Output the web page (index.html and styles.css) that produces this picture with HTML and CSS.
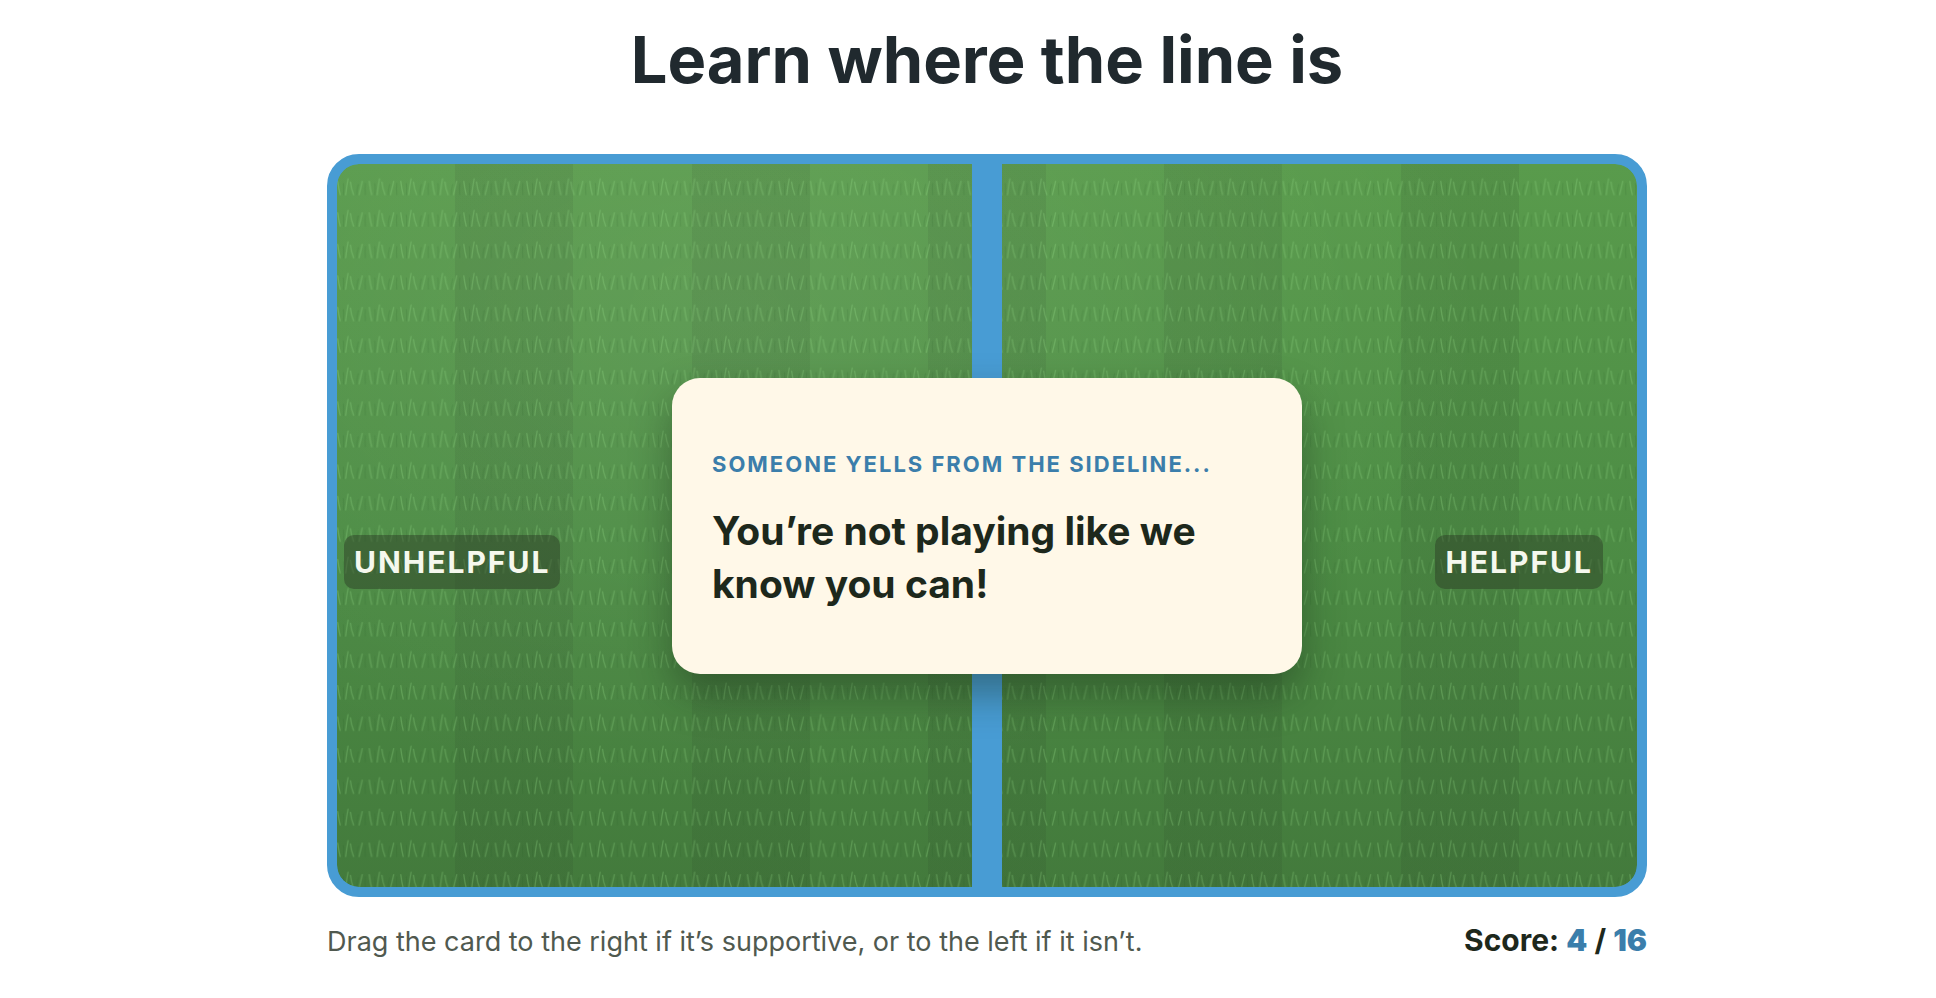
FILE: index.html
```html
<!DOCTYPE html>
<html lang="en">
<head>
<meta charset="utf-8">
<title>Learn where the line is</title>
<link rel="stylesheet" href="styles.css">
</head>
<body>
<main class="game">
  <h1 class="title">Learn where the line is</h1>
  <section class="field" aria-label="Playing field">
    <svg class="turf" viewBox="0 0 1650 918" preserveAspectRatio="xMinYMin slice" aria-hidden="true">
      <defs>
        <pattern id="grass" width="40" height="40" patternUnits="userSpaceOnUse">
          <g fill="none" stroke-width="1.6" stroke-linecap="round">
            <path stroke="#9be08a" stroke-opacity=".28" d="M1 22Q2 31 4 39M11 39Q12 29 14 19M17 23Q18 32 21 39M28 39Q30 31 32 22"/>
            <path stroke="#1d5420" stroke-opacity=".13" d="M8 39Q9 31 8 25M25 39Q25 32 27 26M36 39Q35 31 36 25"/>
          </g>
        </pattern>
      </defs>
      <rect width="100%" height="100%" fill="url(#grass)"/>
    </svg>
    <div class="half half-left"><span class="zone">Unhelpful</span></div>
    <div class="line"></div>
    <div class="half half-right"><span class="zone">Helpful</span></div>
    <article class="card">
      <p class="kicker">Someone yells from the sideline...</p>
      <p class="quote">You’re not playing like we know you can!</p>
    </article>
  </section>
  <footer class="status">
    <p class="hint">Drag the card to the right if it’s supportive, or to the left if it isn’t.</p>
    <p class="score">Score: <b>4</b> / <b>16</b></p>
  </footer>
</main>
</body>
</html>
```
FILE: styles.css
```css
* { box-sizing: border-box; }
body {
  margin: 0;
  padding-left: 38px;
  background: #fff;
  color: #1d281c;
  font-family: Inter, "Liberation Sans", sans-serif;
}
p, h1 { margin: 0; }
.game {
  max-width: 1320px;
  margin: 0 auto;
}
.title {
  padding: 16px 0 50px;
  color: #20292e;
  font-size: 65px;
  line-height: 88px;
  font-weight: 700;
  text-align: center;
}
.field {
  position: relative;
  display: grid;
  grid-template-columns: 1fr 30px 1fr;
  min-height: 743px;
  border: 10px solid #489cd4;
  border-radius: 32px;
  overflow: hidden;
  background:
    radial-gradient(ellipse at 30% 20%, rgba(255, 255, 255, .07), transparent 60%) padding-box,
    repeating-linear-gradient(90deg, transparent 0 calc(100% / 11), rgba(30, 40, 30, .09) calc(100% / 11) calc(200% / 11)) padding-box,
    linear-gradient(#599b4c, #4d8d45 50%, #437a3c) padding-box,
    linear-gradient(#489cd4, #489cd4) border-box;
}
.turf {
  position: absolute;
  inset: 0;
  width: 100%;
  height: 100%;
}
.half {
  position: relative;
  display: flex;
  align-items: center;
  padding-top: 72px;
}
.half-left { padding-left: 7px; }
.half-right { justify-content: flex-end; padding-right: 34px; }
.line { position: relative; background: #489cd4; }
.zone {
  padding: 0 10px;
  border-radius: 10px;
  background: rgba(42, 55, 35, .45);
  color: #f5f8ee;
  font-size: 30px;
  line-height: 54px;
  font-weight: 700;
  letter-spacing: 2px;
  text-transform: uppercase;
}
.card {
  position: absolute;
  top: 50%;
  left: 50%;
  transform: translate(-50%, -50%);
  width: 630px;
  min-height: 296px;
  padding: 46px 40px 40px;
  display: flex;
  flex-direction: column;
  justify-content: center;
  gap: 24px;
  border-radius: 28px;
  background: #fff8e8;
  box-shadow: 0 20px 40px rgba(20, 40, 20, .4);
}
.kicker {
  color: #3b7eab;
  font-size: 22px;
  line-height: 32px;
  font-weight: 700;
  letter-spacing: 2px;
  text-transform: uppercase;
}
.quote {
  font-size: 39px;
  line-height: 53px;
  font-weight: 700;
}
.status {
  display: flex;
  justify-content: space-between;
  align-items: baseline;
  padding-top: 23px;
  line-height: 40px;
}
.hint { color: #50594f; font-size: 27px; }
.score { font-size: 30px; font-weight: 700; }
.score b { color: #3b7eab; }
```
